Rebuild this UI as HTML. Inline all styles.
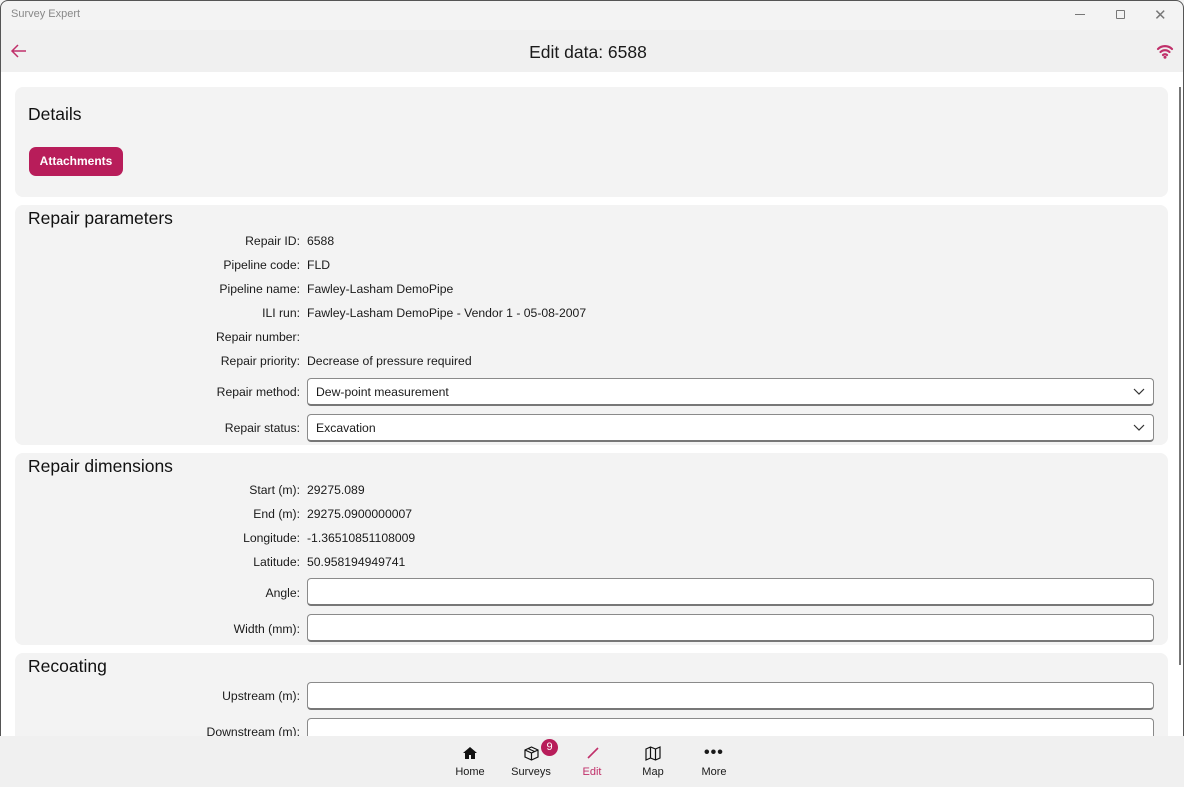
<!DOCTYPE html><html><head><style>
*{margin:0;padding:0;box-sizing:border-box}
body{width:1184px;height:787px;overflow:hidden;background:#fff;font-family:"Segoe UI","Liberation Sans",sans-serif;color:#1a1a1a;position:relative}
.abs{position:absolute}
.card{position:absolute;left:15px;width:1153px;background:#f3f3f3;border-radius:8px}
.h{position:absolute;left:13px;font-size:17.5px;color:#111}
.lab{position:absolute;right:868px;font-size:12.2px;text-align:right;white-space:nowrap}
.val{position:absolute;left:292px;font-size:12.2px;white-space:nowrap}
.inp{position:absolute;left:292px;width:847px;height:28px;border:1px solid #8a8a8a;border-bottom:2px solid #777;border-radius:4px;background:#fff;font-size:12.2px;padding:6px 8px}
.nav{position:absolute;top:736px;left:0;width:1184px;height:51px;background:#f0f0f0}
.ni{position:absolute;top:30px;font-size:11px;transform:translateX(-50%);white-space:nowrap}
</style></head><body>
<div class="abs" style="left:0;top:0;width:1184px;height:30px;background:#f3f3f3"></div>
<div class="abs" style="left:11px;top:8px;font-size:11px;color:#888">Survey Expert</div>
<div class="abs" style="left:1075px;top:14px;width:10px;height:1px;background:#777"></div>
<div class="abs" style="left:1116px;top:10px;width:9px;height:9px;border:1px solid #777;border-radius:1px"></div>
<div class="abs" style="left:1154px;top:6px;font-size:15px;color:#777">✕</div>
<div class="abs" style="left:0;top:30px;width:1184px;height:42px;background:#f0f0f0"></div>
<svg class="abs" style="left:10px;top:43px" width="18" height="16"><path d="M16 8H2M8 2L2 8l6 6" stroke="#c0306a" stroke-width="1.5" fill="none"/></svg>
<div class="abs" style="left:-4px;width:1184px;top:42px;text-align:center;font-size:17.5px">Edit data: 6588</div>
<svg class="abs" style="left:1156px;top:44px" width="18" height="15"><path d="M2 5a10 10 0 0 1 14 0M4.5 8a6.5 6.5 0 0 1 9 0M7 11a3 3 0 0 1 4 0" stroke="#c0306a" stroke-width="2.2" fill="none" stroke-linecap="round"/><circle cx="9" cy="13.3" r="1.5" fill="#c0306a"/></svg>
<div class="abs" style="left:1179px;top:87px;width:2px;height:578px;background:#777"></div>
<div class="abs" style="left:0;top:0;width:1184px;height:787px;border:1px solid #555;border-radius:8px 8px 0 0;pointer-events:none"></div>

<div class="card" style="top:87px;height:110px">
<div class="h" style="top:17px">Details</div>
<div class="abs" style="left:14px;top:60px;width:94px;height:29px;background:#b81d5a;border-radius:7px;color:#fff;font-weight:bold;font-size:12px;text-align:center;line-height:29px">Attachments</div>
</div>

<div class="card" style="top:205px;height:240px">
<div class="h" style="top:3px">Repair parameters</div>
<div class="lab" style="top:29px">Repair ID:</div><div class="val" style="top:29px">6588</div>
<div class="lab" style="top:53px">Pipeline code:</div><div class="val" style="top:53px">FLD</div>
<div class="lab" style="top:77px">Pipeline name:</div><div class="val" style="top:77px">Fawley-Lasham DemoPipe</div>
<div class="lab" style="top:101px">ILI run:</div><div class="val" style="top:101px">Fawley-Lasham DemoPipe - Vendor 1 - 05-08-2007</div>
<div class="lab" style="top:125px">Repair number:</div>
<div class="lab" style="top:149px">Repair priority:</div><div class="val" style="top:149px">Decrease of pressure required</div>
<div class="lab" style="top:180px">Repair method:</div><div class="inp" style="top:173px">Dew-point measurement<svg class="abs" style="right:8px;top:9px" width="12" height="8"><path d="M1 1l5 5 5-5" stroke="#333" fill="none" stroke-width="1.2"/></svg></div>
<div class="lab" style="top:216px">Repair status:</div><div class="inp" style="top:209px">Excavation<svg class="abs" style="right:8px;top:9px" width="12" height="8"><path d="M1 1l5 5 5-5" stroke="#333" fill="none" stroke-width="1.2"/></svg></div>
</div>

<div class="card" style="top:453px;height:192px">
<div class="h" style="top:3px">Repair dimensions</div>
<div class="lab" style="top:30px">Start (m):</div><div class="val" style="top:30px">29275.089</div>
<div class="lab" style="top:54px">End (m):</div><div class="val" style="top:54px">29275.0900000007</div>
<div class="lab" style="top:78px">Longitude:</div><div class="val" style="top:78px">-1.36510851108009</div>
<div class="lab" style="top:102px">Latitude:</div><div class="val" style="top:102px">50.958194949741</div>
<div class="lab" style="top:133px">Angle:</div><div class="inp" style="top:125px"></div>
<div class="lab" style="top:169px">Width (mm):</div><div class="inp" style="top:161px"></div>
</div>

<div class="card" style="top:653px;height:100px">
<div class="h" style="top:3px">Recoating</div>
<div class="lab" style="top:36px">Upstream (m):</div><div class="inp" style="top:29px"></div>
<div class="lab" style="top:72px">Downstream (m):</div><div class="inp" style="top:65px"></div>
</div>

<div class="nav">
<svg class="abs" style="left:462px;top:10px" width="16" height="14"><path d="M8 1L1 7h2v6h4V9h2v4h4V7h2z" fill="#111"/></svg>
<div class="ni" style="left:470px">Home</div>
<svg class="abs" style="left:524px;top:10px" width="15" height="15"><path d="M7.5 1L14 4v7l-6.5 3L1 11V4zM1 4l6.5 3L14 4M7.5 7v7M4 2.5l6.5 3" stroke="#111" fill="none" stroke-width="1.2"/></svg>
<div class="abs" style="left:541px;top:3px;width:17px;height:17px;border-radius:50%;background:#b81d5a;color:#fff;font-size:11px;text-align:center;line-height:17px">9</div>
<div class="ni" style="left:531px">Surveys</div>
<svg class="abs" style="left:586px;top:10px" width="14" height="14"><path d="M2 12L12 2" stroke="#c0306a" stroke-width="1.6"/></svg>
<div class="ni" style="left:592px;color:#c0306a">Edit</div>
<svg class="abs" style="left:645px;top:10px" width="16" height="15"><path d="M1 3l4.5-2 5 2L15 1v11l-4.5 2-5-2L1 14zM5.5 1v11M10.5 3v11" stroke="#111" fill="none" stroke-width="1.2"/></svg>
<div class="ni" style="left:653px">Map</div>
<div class="abs" style="left:704px;top:12px;font-size:16px;letter-spacing:1px;font-weight:bold;line-height:10px">•••</div>
<div class="ni" style="left:714px">More</div>
</div>
</body></html>
